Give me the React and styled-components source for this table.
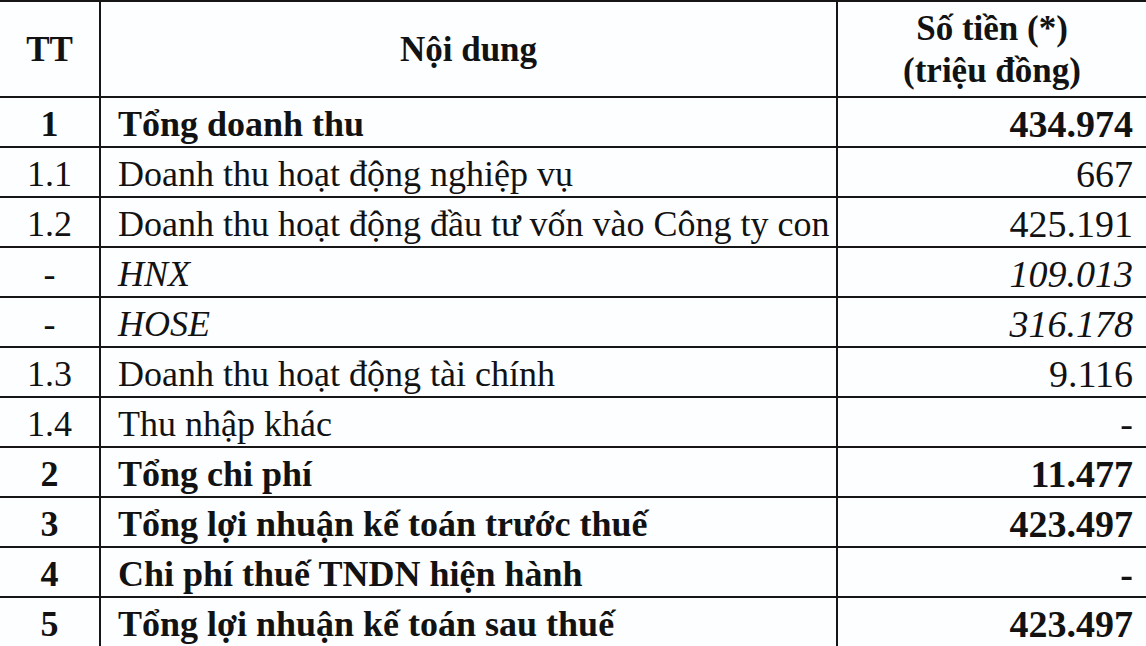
import styled, { createGlobalStyle } from "styled-components";

const GlobalStyle = createGlobalStyle`
  html, body {
    margin: 0;
    padding: 0;
    background: #fdfeff;
    overflow: hidden;
  }
`;

const rows = [
  { tt: "1", name: "Tổng doanh thu", value: "434.974", kind: "bold" },
  { tt: "1.1", name: "Doanh thu hoạt động nghiệp vụ", value: "667" },
  { tt: "1.2", name: "Doanh thu hoạt động đầu tư vốn vào Công ty con", value: "425.191" },
  { tt: "-", name: "HNX", value: "109.013", kind: "italic" },
  { tt: "-", name: "HOSE", value: "316.178", kind: "italic" },
  { tt: "1.3", name: "Doanh thu hoạt động tài chính", value: "9.116" },
  { tt: "1.4", name: "Thu nhập khác", value: "-" },
  { tt: "2", name: "Tổng chi phí", value: "11.477", kind: "bold" },
  { tt: "3", name: "Tổng lợi nhuận kế toán trước thuế", value: "423.497", kind: "bold" },
  { tt: "4", name: "Chi phí thuế TNDN hiện hành", value: "-", kind: "bold" },
  { tt: "5", name: "Tổng lợi nhuận kế toán sau thuế", value: "423.497", kind: "bold" },
];

const App = () => {
  return (
    <>
      <GlobalStyle />
      <Table>
        <colgroup>
          <col style={{ width: 100 }} />
          <col style={{ width: 737 }} />
          <col />
        </colgroup>
        <thead>
          <HeadRow>
            <HeadCell>TT</HeadCell>
            <HeadCell>Nội dung</HeadCell>
            <HeadCell $last>
              Số tiền (*)
              <br />
              (triệu đồng)
            </HeadCell>
          </HeadRow>
        </thead>
        <tbody>
          {rows.map((row, index) => (
            <BodyRow key={index}>
              <NoCell $kind={row.kind}>{row.tt}</NoCell>
              <NameCell $kind={row.kind}>{row.name}</NameCell>
              <ValueCell $kind={row.kind}>{row.value}</ValueCell>
            </BodyRow>
          ))}
        </tbody>
      </Table>
    </>
  );
};

const Table = styled.table`
  width: 1160px;
  border-collapse: collapse;
  table-layout: fixed;
  font-family: "Liberation Serif", "Times New Roman", serif;
  color: #121212;
  font-size: 36px;

  td,
  th {
    border: 2px solid #161616;
  }

  tr > *:first-child {
    border-left: none;
  }

  tr > *:last-child {
    border-right: none;
  }
`;

const HeadRow = styled.tr`
  height: 96px;
`;

const HeadCell = styled.th`
  font-weight: bold;
  font-size: 35px;
  text-align: center;
  vertical-align: middle;
  line-height: 42px;
  padding: ${({ $last }) => ($last ? "2px 14px 0 0" : "2px 0 0")};
`;

const BodyRow = styled.tr`
  height: 50px;
`;

const cellFont = ({ $kind }) =>
  $kind === "bold"
    ? "font-weight: bold;"
    : $kind === "italic"
    ? "font-style: italic;"
    : "";

const NoCell = styled.td`
  text-align: center;
  line-height: 44px;
  padding: 4px 0 0;
  ${({ $kind }) => ($kind === "bold" ? "font-weight: bold;" : "")}
`;

const NameCell = styled.td`
  line-height: 44px;
  padding: 4px 0 0 17px;
  white-space: nowrap;
  ${cellFont}
`;

const ValueCell = styled.td`
  text-align: right;
  line-height: 44px;
  font-size: 38px;
  padding: 4px 27px 0 0;
  ${cellFont}
`;

export default App;
